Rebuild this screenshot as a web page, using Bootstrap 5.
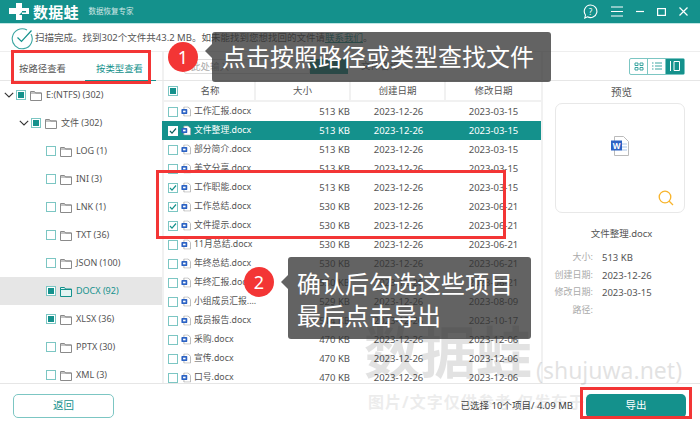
<!DOCTYPE html>
<html lang="zh-CN">
<head>
<meta charset="UTF-8" />
<title>数据蛙数据恢复专家</title>
<link rel="stylesheet" href="https://cdn.jsdelivr.net/npm/bootstrap@5.3.0/dist/css/bootstrap.min.css" />
<style>
  html, body { height: 100%; overflow: hidden; }
  body { width: 700px; height: 427px; position: relative; background: #fff; color: #555; font: 9.5px/1.2 "Noto Sans", "Noto Sans CJK SC", sans-serif; }
  .app-head { height: 24px; background: #14918c; border-bottom: 1px solid #bfe6e4; color: #fff; }
  .brand-name { font-size: 15px; font-weight: 700; letter-spacing: .2px; margin-left: 3px; }
  .brand-sub { font-size: 7.5px; opacity: .8; margin-left: 10px; }
  .win-btns { gap: 13px; margin-right: 12px; }
  .status-bar { height: 27px; padding-left: 11px; font-size: 9.5px; }
  .status-bar a { color: #14918c; }
  .status-ico { flex: none; margin-right: 1px; }
  .app-main { height: 332px; border-top: 1px solid #eee; }
  .side-pane { width: 162px; font-size: 9px; }
  .side-tabs { height: 29px; border-bottom: 1px solid #e6e6e6; font-size: 9.4px; }
  .side-tab { padding: 0 0 0 19px; width: 85px; height: 29px; line-height: 34px; }
  .side-tab.is-on { color: #14918c; width: 71px; padding-left: 11px; border-bottom: 1px solid #14918c; }
  .tree-row { height: 28px; flex: none; }
  .tree-row.is-on { background: #e6e6e6; color: #14918c; }
  .lvl-0 { padding-left: 3px; }
  .lvl-1 { padding-left: 18px; }
  .lvl-2 { padding-left: 46px; }
  .tree-arrow { width: 12px; margin-right: 1px; }
  .chk { width: 10px; height: 10px; flex: none; border: 1px solid #7cc6c3; background: #fff; display: flex; align-items: center; justify-content: center; }
  .chk.is-part::after { content: ""; width: 6px; height: 6px; background: #14918c; }
  .chk svg { display: block; }
  .tick-teal { color: #14918c; }
  .tick-dark { color: #0d5f5c; }
  .tree-ico { margin: 0 4px 0 4px; flex: none; }
  .list-pane { width: 379px; box-shadow: inset 2px 0 #f1f1f1; }
  .list-tools { height: 29px; border-bottom: 1px solid #e6e6e6; padding-left: 22px; }
  .find-box { width: 157px; height: 15px; border: 1px solid #ddd; border-radius: 2px 0 0 2px; padding-left: 6px; color: #aaa; line-height: 13px; }
  .find-btn { width: 48px; height: 15px; background: #14918c; }
  .find-note { margin-left: 13px; width: 227px; }
  .view-btns { border: 1px solid #7cc6c3; border-radius: 2px; height: 17px; margin-right: 15px; }
  .view-btn { width: 18px; height: 15px; display: flex; align-items: center; justify-content: center; border-right: 1px solid #7cc6c3; }
  .view-btn:last-child { border-right: 0; background: #14918c; }
  .file-head, .file-row { display: grid; grid-template-columns: 94px 95px 95px 95px; align-items: center; }
  .file-head { height: 21px; border-bottom: 2px solid #f1f1f1; text-align: center; }
  .file-head > div { height: 100%; line-height: 20px; border-right: 2px solid #f1f1f1; position: relative; }
  .file-head > div:last-child { border-right: 0; }
  .file-head .chk { position: absolute; left: 6px; top: 5px; }
  .file-row { height: 19px; }
  .file-row.is-on { background: #14918c; color: #fff; }
  .file-row.is-on .chk { border-color: #fff; }
  .file-name { display: flex; align-items: center; padding-left: 6px; white-space: nowrap; font-size: 8.8px; }
  .file-name svg.doc-ico { margin: 0 3px; flex: none; }
  .file-size { text-align: right; padding-right: 1px; }
  .file-date { text-align: center; }
  .preview-pane { width: 159px; border-left: 2px solid #f1f1f1; }
  .preview-head { font-size: 10.5px; text-align: center; padding-top: 5px; height: 22px; }
  .preview-box { width: 130px; height: 110px; margin-left: 12px; border: 1px solid #e8e8e8; border-radius: 7px; position: relative; }
  .preview-doc { position: absolute; left: 55px; top: 32px; }
  .preview-lens { position: absolute; right: 10px; bottom: 6px; }
  .preview-name { text-align: center; padding-top: 15px; height: 39px; font-size: 9.5px; }
  .meta-row { display: grid; grid-template-columns: 50px auto; column-gap: 9px; height: 17.5px; }
  .meta-row > span:first-child { text-align: right; color: #aaa; font-size: 9px; }
  .app-foot { height: 44px; border-top: 1px solid #e6e6e6; }
  .back-btn, .go-btn { height: 24px; padding: 0; font-size: 10.5px; border-radius: 5px; --bs-btn-line-height: 1; }
  .back-btn { width: 101px; margin-left: 13px; color: #14918c; border: 1px solid #7cc6c3; background: #fff; }
  .go-btn { width: 100px; margin: 0 14px 0 13px; color: #fff; background: #14918c; border: 0; position: relative; z-index: 1; }
  .picked-note { margin-left: auto; font-size: 9.5px; color: #444; position: relative; }

  /* annotations and watermark sit over the app */
  .mark-big, .mark-url, .mark-line { position: absolute; color: #000; opacity: .11; font-weight: 700; white-space: nowrap; pointer-events: none; }
  .mark-big { left: 364px; top: 318px; font-size: 56px; line-height: 1.2; }
  .mark-url { left: 536px; top: 357px; font-size: 23px; font-weight: 400; }
  .mark-line { left: 368px; top: 393px; font-size: 16px; letter-spacing: 1px; opacity: .07; }
  .red-box { position: absolute; border: 3px solid #f33535; z-index: 2; }
  .box-tabs { left: 11px; top: 50px; width: 140px; height: 34px; }
  .box-rows { left: 156px; top: 170px; width: 350px; height: 69px; }
  .box-go { left: 580px; top: 387px; width: 112px; height: 32px; }
  .tip-box { position: absolute; background: rgba(50, 50, 50, .76); color: #fff; border-radius: 3px; font-size: 24px; line-height: 32px; z-index: 2; }
  .tip-box::before { content: ""; position: absolute; left: -7px; border: 7px solid transparent; border-left: 0; border-right-color: rgba(50, 50, 50, .76); }
  .tip-one { left: 212px; top: 32px; width: 339px; height: 50px; padding: 9px 0 0 10px; }
  .tip-one::before { top: 12px; }
  .tip-two { left: 288px; top: 257px; width: 243px; height: 82px; padding: 11px 0 0 9px; }
  .tip-two::before { top: 18px; }
  .tip-num { position: absolute; width: 30px; height: 30px; border-radius: 50%; background: #f33535; color: #fff; font-size: 18px; line-height: 30px; text-align: center; z-index: 2; }
  .num-one { left: 168px; top: 42px; }
  .num-two { left: 244px; top: 267px; }
</style>
</head>
<body>
<svg width="0" height="0" class="position-absolute">
  <symbol id="ico-folder" viewBox="0 0 12 11"><path d="M.5 10.500v-9h4l1 1.500h6v7.500z" fill="#fff" stroke="#8a8a8a"/><path d="M.5 3h11" stroke="#8a8a8a"/></symbol>
  <symbol id="ico-folder-on" viewBox="0 0 12 11"><path d="M.5 10.500v-9h4l1 1.500h6v7.500z" fill="#e3f4f3" stroke="#14918c"/><path d="M.5 3.500h11" stroke="#14918c"/></symbol>
  <symbol id="ico-doc" viewBox="0 0 12 12"><path d="M3.500.5h5l3 3v8h-8z" fill="#fff" stroke="#aaa"/><rect x=".5" y="3" width="7" height="6" rx="1" fill="#2b62c4"/><rect x="2.500" y="5" width="3" height="2" fill="#fff"/></symbol>
  <symbol id="ico-tick" viewBox="0 0 8 8"><path d="M1 4l2 2.200L7 1.500" fill="none" stroke="currentColor" stroke-width="1.200"/></symbol>
  <symbol id="ico-arrow" viewBox="0 0 10 6"><path d="M.8.800L5 5l4.200-4.200" fill="none" stroke="#333" stroke-width="1.100"/></symbol>
</svg>

<header class="app-head d-flex align-items-center">
  <svg class="ms-2" width="22" height="19" viewBox="0 0 22 19"><path d="M8 1h6v5h7v6h-7v6H8v-6H1V6h7z" fill="#fff"/><path d="M14 9h4v1.500h-4zM11 13l3-3v3z" fill="#14918c"/></svg>
  <span class="brand-name">数据蛙</span>
  <span class="brand-sub">数据恢复专家</span>
  <div class="ms-auto d-flex align-items-center win-btns">
    <svg width="15" height="15" viewBox="0 0 15 15"><path d="M7.500 1a6.300 6.300 0 1 1-3 11.800L1.800 14l.7-3A6.300 6.300 0 0 1 7.500 1z" fill="none" stroke="#fff" stroke-width="1.100"/><text x="7.500" y="10.500" font-size="8" fill="#fff" text-anchor="middle">?</text></svg>
    <svg width="12" height="11" viewBox="0 0 12 11"><path d="M0 1h12M0 5.500h12M0 10h12" stroke="#fff" stroke-width="1.100"/></svg>
    <svg width="8" height="3" viewBox="0 0 8 3"><path d="M0 1.500h8" stroke="#fff" stroke-width="1.200"/></svg>
    <svg width="9" height="8" viewBox="0 0 9 8"><rect x=".6" y=".6" width="7.800" height="6.800" fill="none" stroke="#fff" stroke-width="1.200"/></svg>
    <svg width="9" height="9" viewBox="0 0 9 9"><path d="M.5.500l8 8M8.500.500l-8 8" stroke="#fff" stroke-width="1.200"/></svg>
  </div>
</header>

<div class="status-bar d-flex align-items-center">
  <svg class="status-ico" width="23" height="24" viewBox="0 0 23 24"><path d="M20 8a10 10 0 1 1-4-4" fill="none" stroke="#3aa5a1" stroke-width="1.100"/><path d="M6.500 11.500l4 4 10-11" fill="none" stroke="#14918c" stroke-width="1.200"/></svg>
  <span>扫描完成。找到302个文件共43.2 MB。如未能找到您想找回的文件请<a href="#">联系我们</a>。</span>
</div>

<main class="app-main d-flex">
  <aside class="side-pane d-flex flex-column">
    <div class="side-tabs d-flex">
      <div class="side-tab">按路径查看</div>
      <div class="side-tab is-on">按类型查看</div>
    </div>
    <div class="tree-row lvl-0 d-flex align-items-center"><svg class="tree-arrow" height="6" viewBox="0 0 10 6"><use href="#ico-arrow"/></svg><span class="chk is-part"></span><svg class="tree-ico" width="12" height="11"><use href="#ico-folder"/></svg>E:(NTFS) (302)</div>
    <div class="tree-row lvl-1 d-flex align-items-center"><svg class="tree-arrow" height="6" viewBox="0 0 10 6"><use href="#ico-arrow"/></svg><span class="chk is-part"></span><svg class="tree-ico" width="12" height="11"><use href="#ico-folder"/></svg>文件 (302)</div>
    <div class="tree-row lvl-2 d-flex align-items-center"><span class="chk"></span><svg class="tree-ico" width="12" height="11"><use href="#ico-folder"/></svg>LOG (1)</div>
    <div class="tree-row lvl-2 d-flex align-items-center"><span class="chk"></span><svg class="tree-ico" width="12" height="11"><use href="#ico-folder"/></svg>INI (3)</div>
    <div class="tree-row lvl-2 d-flex align-items-center"><span class="chk"></span><svg class="tree-ico" width="12" height="11"><use href="#ico-folder"/></svg>LNK (1)</div>
    <div class="tree-row lvl-2 d-flex align-items-center"><span class="chk"></span><svg class="tree-ico" width="12" height="11"><use href="#ico-folder"/></svg>TXT (36)</div>
    <div class="tree-row lvl-2 d-flex align-items-center"><span class="chk"></span><svg class="tree-ico" width="12" height="11"><use href="#ico-folder"/></svg>JSON (100)</div>
    <div class="tree-row lvl-2 is-on d-flex align-items-center"><span class="chk is-part"></span><svg class="tree-ico" width="12" height="11"><use href="#ico-folder-on"/></svg>DOCX (92)</div>
    <div class="tree-row lvl-2 d-flex align-items-center"><span class="chk is-part"></span><svg class="tree-ico" width="12" height="11"><use href="#ico-folder"/></svg>XLSX (36)</div>
    <div class="tree-row lvl-2 d-flex align-items-center"><span class="chk"></span><svg class="tree-ico" width="12" height="11"><use href="#ico-folder"/></svg>PPTX (30)</div>
    <div class="tree-row lvl-2 d-flex align-items-center"><span class="chk"></span><svg class="tree-ico" width="12" height="11"><use href="#ico-folder"/></svg>XML (3)</div>
  </aside>

  <section class="list-pane">
    <div class="list-tools d-flex align-items-center">
      <div class="find-box">此处输入</div><div class="find-btn"></div>
      <div class="find-note text-secondary">文件名称</div>
    </div>
    <div class="file-head">
      <div><span class="chk is-part"></span><span class="ps-1">名称</span></div><div>大小</div><div>创建日期</div><div>修改日期</div>
    </div>
    <div class="file-row"><div class="file-name"><span class="chk"></span><svg class="doc-ico" width="10" height="11" viewBox="0 0 12 12"><use href="#ico-doc"/></svg>工作汇报.docx</div><div class="file-size">513 KB</div><div class="file-date">2023-12-26</div><div class="file-date">2023-03-15</div></div>
    <div class="file-row is-on"><div class="file-name"><span class="chk"><svg width="8" height="8" class="tick-dark"><use href="#ico-tick"/></svg></span><svg class="doc-ico" width="10" height="11" viewBox="0 0 12 12"><use href="#ico-doc"/></svg>文件整理.docx</div><div class="file-size">513 KB</div><div class="file-date">2023-12-26</div><div class="file-date">2023-03-15</div></div>
    <div class="file-row"><div class="file-name"><span class="chk"></span><svg class="doc-ico" width="10" height="11" viewBox="0 0 12 12"><use href="#ico-doc"/></svg>部分简介.docx</div><div class="file-size">513 KB</div><div class="file-date">2023-12-26</div><div class="file-date">2023-03-15</div></div>
    <div class="file-row"><div class="file-name"><span class="chk"></span><svg class="doc-ico" width="10" height="11" viewBox="0 0 12 12"><use href="#ico-doc"/></svg>美文分享.docx</div><div class="file-size">513 KB</div><div class="file-date">2023-12-26</div><div class="file-date">2023-03-15</div></div>
    <div class="file-row"><div class="file-name"><span class="chk"><svg width="8" height="8" class="tick-teal"><use href="#ico-tick"/></svg></span><svg class="doc-ico" width="10" height="11" viewBox="0 0 12 12"><use href="#ico-doc"/></svg>工作职能.docx</div><div class="file-size">513 KB</div><div class="file-date">2023-12-26</div><div class="file-date">2023-03-15</div></div>
    <div class="file-row"><div class="file-name"><span class="chk"><svg width="8" height="8" class="tick-teal"><use href="#ico-tick"/></svg></span><svg class="doc-ico" width="10" height="11" viewBox="0 0 12 12"><use href="#ico-doc"/></svg>工作总结.docx</div><div class="file-size">530 KB</div><div class="file-date">2023-12-26</div><div class="file-date">2023-06-21</div></div>
    <div class="file-row"><div class="file-name"><span class="chk"><svg width="8" height="8" class="tick-teal"><use href="#ico-tick"/></svg></span><svg class="doc-ico" width="10" height="11" viewBox="0 0 12 12"><use href="#ico-doc"/></svg>文件提示.docx</div><div class="file-size">530 KB</div><div class="file-date">2023-12-26</div><div class="file-date">2023-06-21</div></div>
    <div class="file-row"><div class="file-name"><span class="chk"></span><svg class="doc-ico" width="10" height="11" viewBox="0 0 12 12"><use href="#ico-doc"/></svg>11月总结.docx</div><div class="file-size">530 KB</div><div class="file-date">2023-12-26</div><div class="file-date">2023-06-21</div></div>
    <div class="file-row"><div class="file-name"><span class="chk"></span><svg class="doc-ico" width="10" height="11" viewBox="0 0 12 12"><use href="#ico-doc"/></svg>年终总结.docx</div><div class="file-size">530 KB</div><div class="file-date">2023-12-26</div><div class="file-date">2023-06-21</div></div>
    <div class="file-row"><div class="file-name"><span class="chk"></span><svg class="doc-ico" width="10" height="11" viewBox="0 0 12 12"><use href="#ico-doc"/></svg>年终汇报.docx</div><div class="file-size">530 KB</div><div class="file-date">2023-12-26</div><div class="file-date">2023-06-21</div></div>
    <div class="file-row"><div class="file-name"><span class="chk"></span><svg class="doc-ico" width="10" height="11" viewBox="0 0 12 12"><use href="#ico-doc"/></svg>小组成员汇报....</div><div class="file-size">529 KB</div><div class="file-date">2023-12-26</div><div class="file-date">2023-08-09</div></div>
    <div class="file-row"><div class="file-name"><span class="chk"></span><svg class="doc-ico" width="10" height="11" viewBox="0 0 12 12"><use href="#ico-doc"/></svg>成员报告.docx</div><div class="file-size">514 KB</div><div class="file-date">2023-12-26</div><div class="file-date">2023-10-17</div></div>
    <div class="file-row"><div class="file-name"><span class="chk"></span><svg class="doc-ico" width="10" height="11" viewBox="0 0 12 12"><use href="#ico-doc"/></svg>采购.docx</div><div class="file-size">470 KB</div><div class="file-date">2023-12-26</div><div class="file-date">2023-12-06</div></div>
    <div class="file-row"><div class="file-name"><span class="chk"></span><svg class="doc-ico" width="10" height="11" viewBox="0 0 12 12"><use href="#ico-doc"/></svg>宣传.docx</div><div class="file-size">470 KB</div><div class="file-date">2023-12-26</div><div class="file-date">2023-12-06</div></div>
    <div class="file-row"><div class="file-name"><span class="chk"></span><svg class="doc-ico" width="10" height="11" viewBox="0 0 12 12"><use href="#ico-doc"/></svg>口号.docx</div><div class="file-size">470 KB</div><div class="file-date">2023-12-26</div><div class="file-date">2023-12-06</div></div>
  </section>

  <aside class="preview-pane">
    <div class="list-tools d-flex align-items-center justify-content-end p-0">
      <div class="view-btns d-flex">
        <div class="view-btn"><svg width="10" height="9" viewBox="0 0 10 9"><path d="M1 1h3v2.500H1zM6 1h3v2.500H6zM1 5.500h3V8H1zM6 5.500h3V8H6z" fill="none" stroke="#3aa5a1"/></svg></div>
        <div class="view-btn"><svg width="10" height="8" viewBox="0 0 10 8"><path d="M0 1h1.500M3 1h7M0 4h1.500M3 4h7M0 7h1.500M3 7h7" stroke="#3aa5a1"/></svg></div>
        <div class="view-btn"><svg width="10" height="10" viewBox="0 0 10 10"><path d="M.5 0v10M4 .5h5.500v9H4z" fill="none" stroke="#fff"/></svg></div>
      </div>
    </div>
    <div class="preview-head">预览</div>
    <div class="preview-box">
      <svg class="preview-doc" width="18" height="20" viewBox="0 0 18 20"><path d="M3.500.5h9l5 5v14h-14z" fill="#fff" stroke="#bbb"/><path d="M11 8h5M11 11h5M11 14h5" stroke="#a9c6ea"/><rect y="4.500" width="11" height="10" fill="#2b62c4"/><text x="5.500" y="12.500" font-size="8" font-weight="700" fill="#fff" text-anchor="middle">W</text></svg>
      <svg class="preview-lens" width="16" height="16" viewBox="0 0 16 16"><circle cx="7" cy="7" r="5.800" fill="none" stroke="#f8b42c" stroke-width="1.300"/><path d="M11 11l4 4" stroke="#f8b42c" stroke-width="1.300"/></svg>
    </div>
    <div class="preview-name">文件整理.docx</div>
    <div class="meta-row"><span>大小:</span><span>513 KB</span></div>
    <div class="meta-row"><span>创建日期:</span><span>2023-12-26</span></div>
    <div class="meta-row"><span>修改日期:</span><span>2023-03-15</span></div>
    <div class="meta-row"><span>路径:</span><span></span></div>
  </aside>
</main>

<footer class="app-foot d-flex align-items-center">
  <button type="button" class="btn back-btn">返回</button>
  <span class="picked-note">已选择 10个项目/ 4.09 MB</span>
  <button type="button" class="btn go-btn">导出</button>
</footer>

<div class="mark-big">数据蛙</div>
<div class="mark-url">(shujuwa.net)</div>
<div class="mark-line">图片/文字仅供参考,仅发布于数据蛙官方</div>

<div class="red-box box-tabs"></div>
<div class="red-box box-rows"></div>
<div class="red-box box-go"></div>

<div class="tip-num num-one">1</div>
<div class="tip-box tip-one">点击按照路径或类型查找文件</div>
<div class="tip-num num-two">2</div>
<div class="tip-box tip-two">确认后勾选这些项目<br />最后点击导出</div>

<script src="https://cdn.jsdelivr.net/npm/bootstrap@5.3.0/dist/js/bootstrap.bundle.min.js"></script>
</body>
</html>
